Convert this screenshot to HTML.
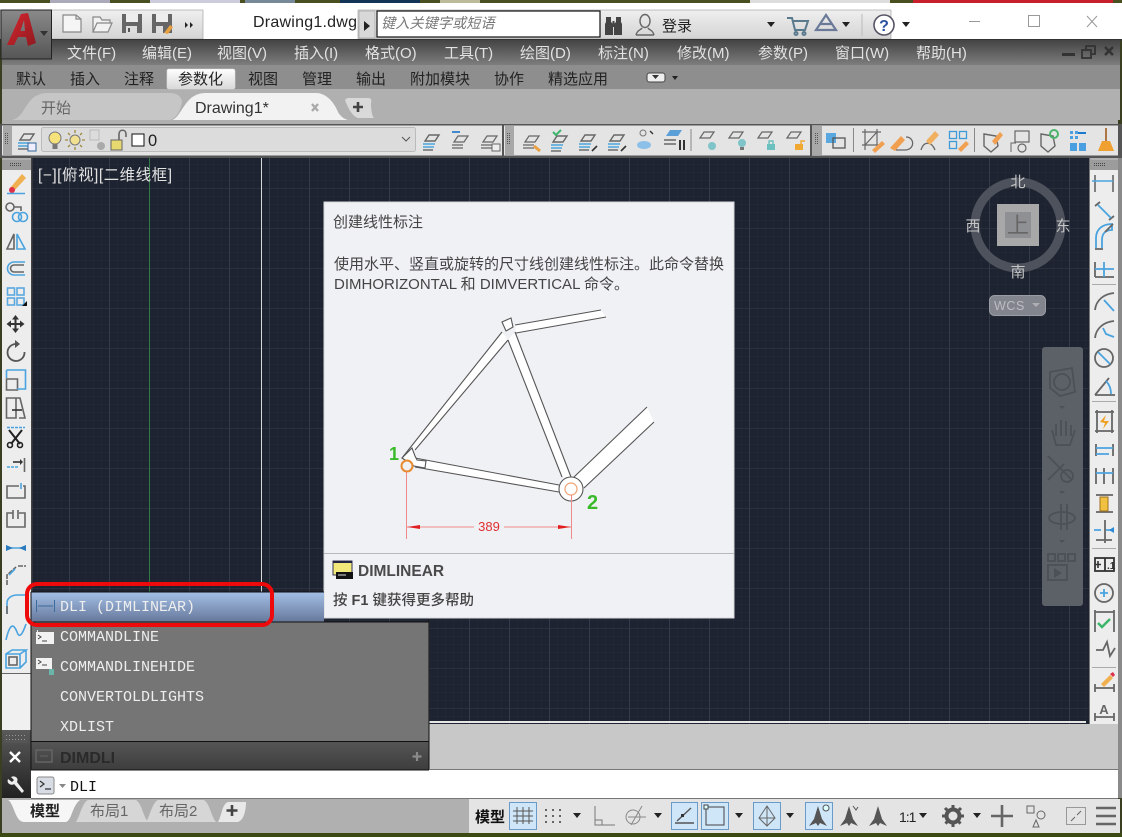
<!DOCTYPE html>
<html><head><meta charset="utf-8"><style>
html,body{margin:0;padding:0;background:#222}
svg{display:block}
text{font-family:"Liberation Sans","Noto Sans CJK SC",sans-serif}
.m{font-size:15px;fill:#e2e2e2}
.r{font-size:15px;fill:#222}
.c{font-family:"Liberation Mono","DejaVu Sans Mono",monospace;font-size:15px;fill:#eee}
.t{font-size:15px;fill:#444}
</style></head><body>
<svg width="1122" height="837" viewBox="0 0 1122 837" xmlns="http://www.w3.org/2000/svg">
<defs>
<linearGradient id="gq" x1="0" y1="0" x2="0" y2="1"><stop offset="0" stop-color="#efefef"/><stop offset="1" stop-color="#d4d4d4"/></linearGradient>
<linearGradient id="gm" x1="0" y1="0" x2="0" y2="1"><stop offset="0" stop-color="#444"/><stop offset="1" stop-color="#7d7d7d"/></linearGradient>
<linearGradient id="ga" x1="0" y1="0" x2="0" y2="1"><stop offset="0" stop-color="#8a8a8a"/><stop offset="1" stop-color="#555"/></linearGradient>
<linearGradient id="gA" x1="0" y1="0" x2="1" y2="1"><stop offset="0" stop-color="#d8262e"/><stop offset="1" stop-color="#8e1a20"/></linearGradient>
<linearGradient id="gh" x1="0" y1="0" x2="0" y2="1"><stop offset="0" stop-color="#a3bfe6"/><stop offset="1" stop-color="#66789a"/></linearGradient>
<linearGradient id="gf" x1="0" y1="0" x2="0" y2="1"><stop offset="0" stop-color="#555"/><stop offset="1" stop-color="#3d3d3d"/></linearGradient>
<linearGradient id="gt" x1="0" y1="0" x2="0" y2="1"><stop offset="0" stop-color="#fff"/><stop offset="1" stop-color="#d8d8d8"/></linearGradient>
<linearGradient id="gd" x1="0" y1="0" x2="0" y2="1"><stop offset="0" stop-color="#5a5a5a"/><stop offset="1" stop-color="#222"/></linearGradient>
<pattern id="p1" width="8" height="8" patternUnits="userSpaceOnUse" x="5" y="4"><path d="M0 .5H8M.5 0V8" stroke="#212733" stroke-width="1" fill="none"/></pattern>
<pattern id="p2" width="40" height="40" patternUnits="userSpaceOnUse" x="29" y="28"><path d="M0 .5H40" stroke="#2a303c" stroke-width="1" fill="none"/><path d="M.5 0V40" stroke="#343b48" stroke-width="1" fill="none"/></pattern>
<g id="lay" fill="none" stroke="#666" stroke-width="1.2"><path d="M-6 2L-2-4H8L4 2ZM-8 5H3M-8 8H3"/></g>
<g id="layb" fill="none" stroke-width="1.4"><path d="M-6 1L-2-5H8L4 1Z" stroke="#666"/><path d="M-8 4H4M-8 7H3" stroke="#4aa3df"/><path d="M-8 10H2" stroke="#666"/></g>
<g id="pl"><path d="M-7-1L-3-7H7L3-1Z" fill="none" stroke="#666" stroke-width="1.2"/></g>
<g id="dim" fill="none" stroke="#666" stroke-width="1.6"><path d="M-9-8V9M9-8V9"/><path d="M-12-2H9" stroke="#4aa3df"/></g>
<g id="dots" fill="#444"><rect x="0" y="0" width="1" height="1"/><rect x="2" y="0" width="1" height="1"/><rect x="4" y="0" width="1" height="1"/><rect x="0" y="2" width="1" height="1"/><rect x="2" y="2" width="1" height="1"/><rect x="4" y="2" width="1" height="1"/><rect x="6" y="0" width="1" height="1"/><rect x="8" y="0" width="1" height="1"/><rect x="10" y="0" width="1" height="1"/><rect x="6" y="2" width="1" height="1"/><rect x="8" y="2" width="1" height="1"/><rect x="10" y="2" width="1" height="1"/></g>
<g id="grip" fill="#555"><rect x="0" y="0" width="1" height="1"/><rect x="2" y="0" width="1" height="1"/><rect x="0" y="2" width="1" height="1"/><rect x="2" y="2" width="1" height="1"/><rect x="0" y="4" width="1" height="1"/><rect x="2" y="4" width="1" height="1"/><rect x="0" y="6" width="1" height="1"/><rect x="2" y="6" width="1" height="1"/><rect x="0" y="8" width="1" height="1"/><rect x="2" y="8" width="1" height="1"/><rect x="0" y="10" width="1" height="1"/><rect x="2" y="10" width="1" height="1"/></g>
<path id="da" d="M-4-2H4L0 3Z" fill="#222"/>
<path id="rock" d="M0-11L4 2L9 9L2 6L0 9L-2 6L-9 9L-4 2Z" fill="#555"/>
</defs>

<!-- wallpaper -->
<rect width="1122" height="837" fill="#3b3f22"/>
<rect x="0" y="0" width="1122" height="3" fill="#4a4f20"/>
<rect x="50" width="60" height="3" fill="#aab"/><rect x="150" width="90" height="3" fill="#ccd"/><rect x="245" width="50" height="3" fill="#789"/><rect x="340" width="80" height="3" fill="#135"/><rect x="440" width="40" height="3" fill="#bb9"/>
<rect x="750" width="140" height="3" fill="#ddd"/><rect x="913" width="200" height="3" fill="#c8202a"/>

<!-- window -->
<rect x="2" y="3" width="1116" height="830" fill="#b0b0b0"/>
<rect x="0" y="3" width="1122" height="36" fill="#fff"/>
<rect x="0" y="10" width="203" height="29" fill="url(#gq)" stroke="#999" stroke-width=".6"/>
<rect x="358" y="10" width="533" height="29" fill="url(#gq)" stroke="#999" stroke-width=".6"/>
<rect x="0" y="39" width="1122" height="1.500" fill="#333"/>
<rect x="2" y="40" width="1118" height="25" fill="url(#gm)"/>
<rect x="2" y="65" width="1118" height="24" fill="#8e8e8e"/>
<rect x="2" y="89" width="1118" height="31" fill="#b0b0b0"/>

<!-- App button -->
<rect x="1" y="10" width="50.500" height="49" fill="url(#ga)" stroke="#222"/>
<path d="M7 45L21 14L28 13L36 43L28 46L26 37H18L14 45ZM20.500 31H25L24 20Z" fill="url(#gA)" fill-rule="evenodd"/>
<path d="M40 31h8l-4 5z" fill="#333"/>

<!-- QAT icons -->
<g fill="none" stroke="#888" stroke-width="1.2">
<path d="M63 15H76L81 19V32H63Z" fill="#f5f5f5"/><path d="M76 15V19H81"/>
<path d="M93 32V17H100L102 20H110V23M93 32L97 23H112L108 32Z" fill="#f2f2f2"/>
</g>
<g>
<path d="M122 14H142V33H122Z" fill="#666"/><rect x="126" y="14" width="12" height="8" fill="#eee"/><rect x="126" y="26" width="11" height="7" fill="#ddd"/><rect x="128" y="28" width="2" height="4" fill="#555"/>
<path d="M152 14H172V33H152Z" fill="#666"/><rect x="156" y="14" width="12" height="8" fill="#eee"/><rect x="156" y="26" width="7" height="7" fill="#ddd"/>
<path d="M164 33L170 25L173 27L168 34Z" fill="#e8a040"/>
<path d="M185 22l3 3-3 3zM190 22l3 3-3 3z" fill="#222"/>
</g>
<text x="253" y="27" font-size="16" fill="#222" textLength="104" lengthAdjust="spacing">Drawing1.dwg</text>
<rect x="359" y="11" width="16" height="27" fill="#d8d8d8" stroke="#999" stroke-width=".6"/>
<path d="M364 21l6 5-6 5z" fill="#222"/>
<rect x="377" y="11" width="223" height="26" fill="#fff" stroke="#111" stroke-width="1.2"/>
<text x="381" y="28" font-size="14.200" font-style="italic" fill="#777">键入关键字或短语</text>

<!-- Infocenter -->
<g fill="#444">
<path d="M606 17h5v5l2 2v11h-8V24l1-2ZM616 17h5v5l1 2v11h-8V24l2-2Z"/><rect x="612.500" y="21" width="2" height="6"/>
</g>
<g fill="none" stroke="#666" stroke-width="1.4"><ellipse cx="645" cy="21" rx="5" ry="6.500"/><path d="M636 35c1-5 5-5 6-7M654 35c-1-5-5-5-6-7M636 35H654"/></g>
<text x="662" y="31" font-size="15" fill="#222">登录</text>
<use href="#da" x="771" y="24"/>
<g fill="none" stroke="#5a7a8e" stroke-width="2"><path d="M787 18H792L795 30H805L808 21H793"/><circle cx="796" cy="33.500" r="1.500"/><circle cx="804" cy="33.500" r="1.500"/></g>
<g fill="none" stroke="#6a7a98" stroke-width="2.200"><path d="M826 15L816 30H836ZM820 24h12"/></g>
<use href="#da" x="846" y="24"/>
<path d="M862 14V36" stroke="#bbb"/>
<circle cx="884" cy="25" r="10" fill="#fff" stroke="#556" stroke-width="1.600"/>
<text x="884" y="31" font-size="16" font-weight="bold" fill="#2a52a0" text-anchor="middle">?</text>
<use href="#da" x="906" y="24"/>
<!-- window btn -->
<path d="M969 21.500H980" stroke="#999"/><rect x="1028.500" y="15.500" width="11" height="11" fill="none" stroke="#999"/><path d="M1087 16L1097 27M1097 16L1087 27" stroke="#999" fill="none"/>

<!-- Menu -->
<text class="m" x="67" y="58">文件(F)</text><text class="m" x="142" y="58">编辑(E)</text><text class="m" x="217" y="58">视图(V)</text><text class="m" x="294" y="58">插入(I)</text><text class="m" x="365" y="58">格式(O)</text><text class="m" x="444" y="58">工具(T)</text><text class="m" x="520" y="58">绘图(D)</text><text class="m" x="598" y="58">标注(N)</text><text class="m" x="677" y="58">修改(M)</text><text class="m" x="758" y="58">参数(P)</text><text class="m" x="835" y="58">窗口(W)</text><text class="m" x="916" y="58">帮助(H)</text>
<rect x="1062" y="53" width="13" height="3" fill="#333"/>
<g fill="none" stroke="#333" stroke-width="1.800"><rect x="1082" y="50" width="9" height="8"/><path d="M1086 49V46H1095V54H1092"/></g>
<path d="M1105 47L1113 55M1113 47L1105 55" stroke="#333" stroke-width="2.600"/>

<!-- Ribbon -->
<rect x="167" y="69" width="68" height="20" rx="2" fill="url(#gt)" stroke="#ddd" stroke-width=".6"/>
<text class="r" x="16" y="84">默认</text><text class="r" x="70" y="84">插入</text><text class="r" x="124" y="84">注释</text><text class="r" x="178" y="84">参数化</text><text class="r" x="248" y="84">视图</text><text class="r" x="302" y="84">管理</text><text class="r" x="356" y="84">输出</text><text class="r" x="410" y="84">附加模块</text><text class="r" x="494" y="84">协作</text><text class="r" x="548" y="84">精选应用</text>
<rect x="647" y="73" width="18" height="9" rx="2.500" fill="#eee" stroke="#444"/><path d="M652 75h7l-3.500 4z" fill="#333"/><path d="M672 76h6l-3 4z" fill="#222"/>

<!-- File tabs -->
<path d="M12 120C24 118 26 99 38 95C42 93 46 93 50 93H170C178 93 182 98 182 102C180 112 176 118 170 120Z" fill="#c6c6c6"/>
<path d="M172 120C180 118 184 100 196 95C200 93 204 93 208 93H316C326 93 334 102 338 112C340 116 344 119 348 120Z" fill="#f2f2f2"/>
<text x="41" y="113" font-size="15" fill="#666">开始</text>
<text x="195" y="113" font-size="16" fill="#333">Drawing1*</text>
<path d="M312 104L318 111M318 104L312 111" stroke="#aaa" stroke-width="2.400"/>
<path d="M345 100C347 97 350 98 352 98H368C371 98 372 100 371 103C371 110 372 116 374 118H358C352 116 348 108 345 100Z" fill="#d9d9d9"/>
<path d="M358 102V112M353 107H363" stroke="#444" stroke-width="2.600"/>

<!-- Toolbars -->
<rect x="0" y="124" width="1122" height="34" fill="#555"/>
<rect x="2" y="125.500" width="500" height="30" fill="#e4e4e4"/>
<rect x="504" y="125.500" width="306" height="30" fill="#e4e4e4"/>
<rect x="812" y="125.500" width="306" height="30" fill="#e4e4e4"/>
<rect x="3" y="126" width="9" height="29" fill="#a8a8a8"/><rect x="505" y="126" width="9" height="29" fill="#a8a8a8"/><rect x="812" y="126" width="10" height="29" fill="#a8a8a8"/>
<use href="#grip" x="5" y="133"/><use href="#grip" x="507" y="133"/><use href="#grip" x="815" y="133"/>
<rect x="41.500" y="127.500" width="374" height="24" rx="2" fill="#dcdcdc" stroke="#bbb"/>
<use href="#layb" x="26" y="139"/><rect x="28" y="143" width="8" height="8" fill="#eef" stroke="#369"/>
<!-- layer state -->
<circle cx="55" cy="138" r="6" fill="#f6e27a" stroke="#777"/><rect x="52.500" y="144" width="5" height="5" fill="#777"/>
<circle cx="75" cy="140" r="5" fill="#f0e090" stroke="#777"/><path d="M75 130V133M75 147V150M65 140H68M82 140H85M68 133L70 135M80 145L82 147M82 133L80 135M70 145L68 147" stroke="#a08a40" stroke-width="1.300"/>
<rect x="90" y="130" width="9" height="10" fill="none" stroke="#bbb"/><circle cx="101" cy="146" r="4" fill="#aaa"/>
<rect x="111" y="140" width="11" height="10" fill="#e8d870" stroke="#666"/><path d="M119 140V134C119 129 126 129 126 134V137" fill="none" stroke="#666" stroke-width="1.600"/>
<rect x="132" y="134" width="12" height="12" fill="#fff" stroke="#111"/>
<text x="148" y="146" font-size="16.500" fill="#222">0</text>
<path d="M402 137L406 141L410 137" fill="none" stroke="#555"/>
<use href="#layb" x="431" y="140"/><use href="#lay" x="460" y="140"/><path d="M452 132h8" stroke="#48c" stroke-width="2"/><use href="#lay" x="489" y="140"/><rect x="492" y="144" width="8" height="7" fill="#eee" stroke="#666"/>
<use href="#lay" x="531" y="140"/><path d="M534 146l6 5" stroke="#e8a040" stroke-width="3"/>
<use href="#layb" x="559" y="141"/><path d="M553 132l3 3 5-5" stroke="#3ab56a" stroke-width="2" fill="none"/>
<use href="#layb" x="587" y="140"/><path d="M592 151l5-5" stroke="#333" stroke-width="1.600"/>
<use href="#layb" x="616" y="140"/><path d="M621 151l5-5" stroke="#333" stroke-width="1.600"/>
<circle cx="643" cy="133" r="3" fill="none" stroke="#777"/><ellipse cx="644" cy="145" rx="7" ry="4" fill="#8cc0e8"/><path d="M650 131l3 3" stroke="#333" stroke-width="1.400"/>
<path d="M666 136L670 130H682L678 136Z" fill="#5a9fd8"/><path d="M664 140H676M664 144H676" stroke="#666" stroke-width="1.400"/><path d="M680 140V150M684 140V150" stroke="#333" stroke-width="2"/>
<path d="M691 129V151" stroke="#888"/>
<use href="#pl" x="707" y="139"/><circle cx="712" cy="146" r="4" fill="#7ec4c8"/>
<use href="#pl" x="736" y="139"/><circle cx="742" cy="143" r="4" fill="#7ec4c8"/><rect x="740" y="147" width="4" height="3" fill="#777"/>
<use href="#pl" x="765" y="139"/><rect x="767" y="144" width="8" height="6" fill="#6cc0c0"/><path d="M769 144V141H773V144" stroke="#6cc0c0" fill="none" stroke-width="1.400"/>
<use href="#pl" x="794" y="139"/><rect x="795" y="144" width="8" height="6" fill="#f0a830"/><path d="M801 144V141H805" stroke="#f0a830" fill="none" stroke-width="1.400"/>
<rect x="826" y="133" width="10" height="10" fill="#5aa8e0"/><rect x="833" y="138" width="12" height="10" fill="none" stroke="#555" stroke-width="1.300"/>
<path d="M853.500 128V152" stroke="#888"/>
<g stroke="#666" fill="none" stroke-width="1.200"><path d="M862 132H881M862 145H881M865 129V150M877 129V150M865 145L877 132"/></g><path d="M872 150L882 141L885 144L875 153Z" fill="#f0a050"/>
<path d="M890 148L901 136L905 140L895 151Z" fill="#f0a050"/><path d="M906 137C915 137 915 150 905 150H896" fill="none" stroke="#666" stroke-width="1.300"/>
<path d="M921 150C924 140 932 142 935 150" fill="none" stroke="#666" stroke-width="1.300"/><path d="M926 141L935 131L939 135L930 145Z" fill="#f0b060"/>
<g fill="none" stroke="#3f9ad8" stroke-width="1.300"><rect x="949.500" y="131.500" width="7" height="7"/><rect x="959.500" y="131.500" width="7" height="7"/><rect x="949.500" y="141.500" width="7" height="7"/></g><path d="M958 149L966 141L969 144L961 152Z" fill="#f0a050"/>
<path d="M974.500 128V152" stroke="#888"/>
<path d="M984 134L996 136L998 146L991 152L984 146Z" fill="none" stroke="#666" stroke-width="1.400"/><path d="M992 141L1000 132L1003 135L995 145Z" fill="#f0a050"/>
<rect x="1015" y="131" width="14" height="11" fill="none" stroke="#666" stroke-width="1.200"/><path d="M1011 152V143H1016" fill="none" stroke="#666"/><circle cx="1022" cy="148" r="4" fill="none" stroke="#666" stroke-width="1.200"/>
<path d="M1041 134L1053 136L1055 146L1048 152L1041 146Z" fill="none" stroke="#666" stroke-width="1.400"/><circle cx="1054" cy="134" r="4" fill="none" stroke="#4ab56a" stroke-width="2"/>
<g fill="#4a9fe0"><rect x="1070" y="131" width="3" height="3"/><rect x="1075" y="131" width="3" height="3"/><rect x="1070" y="136" width="3" height="3"/><rect x="1075" y="136" width="3" height="3"/><rect x="1070" y="143" width="7" height="8"/><rect x="1079" y="143" width="7" height="8"/></g><path d="M1078 133H1086" stroke="#1a7ad0" stroke-width="2"/>
<path d="M1106 128V141" stroke="#a05a20" stroke-width="1.600"/><path d="M1102 141H1110L1114 151H1098Z" fill="#f0a030"/>

<!-- Canvas -->
<rect x="31" y="158" width="1058" height="566" fill="#1d2330"/>
<rect x="31" y="158" width="1058" height="566" fill="url(#p1)"/>
<rect x="31" y="158" width="1058" height="566" fill="url(#p2)"/>
<path d="M149.500 158V722" stroke="#2f7a45"/>
<path d="M261.500 158V722" stroke="#d8d8d8"/>
<rect x="31" y="721" width="1055" height="2" fill="#e6e6e6"/>
<text x="38" y="180" font-size="15.500" fill="#e2e2e2" textLength="134" lengthAdjust="spacing">[−][俯视][二维线框]</text>

<!-- ViewCube -->
<circle cx="1018" cy="225" r="43" fill="none" stroke="#4d525c" stroke-width="9"/>
<rect x="997" y="204" width="42" height="42" fill="#a8a8a8"/><rect x="1005" y="212" width="26" height="26" fill="#8f9094"/>
<text x="1018" y="233" font-size="22" fill="#666" text-anchor="middle">上</text>
<g font-size="15" fill="#c4c4c4" text-anchor="middle"><text x="1018" y="187">北</text><text x="1018" y="277">南</text><text x="973" y="231">西</text><text x="1063" y="231">东</text></g>
<rect x="989.500" y="295.500" width="56" height="20" rx="5" fill="#83858e" stroke="#9a9ca4"/>
<text x="994" y="310" font-size="12.500" letter-spacing=".6" fill="#bdbdc2">WCS</text><path d="M1032 303h8l-4 4z" fill="#b0b0b4"/>

<!-- Nav bar -->
<rect x="1042" y="347" width="41" height="259" rx="3" fill="#5c6067"/>
<g fill="none" stroke="#4c5057" stroke-width="1.800">
<path d="M1050 372L1072 368L1075 392L1060 396L1050 388Z"/><circle cx="1062" cy="382" r="8"/>
<path d="M1052 430L1056 445H1070L1075 430M1056 424V436M1061 420V436M1066 421V436M1071 425V436"/>
<path d="M1048 456L1072 480M1048 480L1064 464"/><circle cx="1067" cy="476" r="6"/>
<path d="M1061 504V530M1067 504V530"/><ellipse cx="1062" cy="518" rx="13" ry="6"/>
<rect x="1048" y="554" width="7" height="7"/><rect x="1058" y="554" width="7" height="7"/><rect x="1068" y="554" width="7" height="7"/><rect x="1048" y="565" width="19" height="15"/>
</g>
<path d="M1054 568l8 5-8 5z" fill="#4c5057"/>
<path d="M1059 406h6l-3 3zM1059 491h6l-3 3zM1059 540h6l-3 3z" fill="#4c5057"/>

<!-- Tooltip -->
<rect x="324" y="202" width="410" height="416" fill="#f0f1f5" stroke="#d6d7db"/>
<text class="t" x="333" y="227">创建线性标注</text>
<text class="t" x="334" y="269">使用水平、竖直或旋转的尺寸线创建线性标注。此命令替换</text>
<text class="t" x="334" y="289">DIMHORIZONTAL 和 DIMVERTICAL 命令。</text>
<!-- bike -->
<g stroke="#555" stroke-width="1.100" fill="#fff">
<path d="M515 325L601 310L606 317L516 333Z" stroke="none"/><path d="M515 325L601 310M516 333L606 317" fill="none"/>
<path d="M402 458L502 332L508 340L415 450Z" stroke="none"/><path d="M402 458L502 332M415 450L508 340" fill="none"/>
<path d="M508 340L562 477L571 477L515 332Z" stroke="none"/><path d="M508 340L562 477M515 332L571 477" fill="none"/>
<path d="M415 458L559 485V492L415 467Z" stroke="none"/><path d="M415 458L559 485M415 467L559 492" fill="none"/>
<path d="M574 477L647 407L654 422L584 488Z" stroke="none"/><path d="M574 477L647 407M584 488L654 422" fill="none"/>
<path d="M502 322L511 318L513 327L506 331Z"/>
<circle cx="571" cy="489" r="12"/>
<path d="M402 458L412 448L415 456L417 460L426 461L425 468L414 466L408 462Z"/>
</g>
<circle cx="571" cy="489" r="6" fill="none" stroke="#f0a070" stroke-width="1.200"/>
<circle cx="407" cy="466" r="5.500" fill="#f0f1f5" stroke="#e88a30" stroke-width="2"/>
<g stroke="#f08a8a"><path d="M406.500 472V539M571.500 495V539M407 527H474M504 527H571"/></g>
<path d="M407 527L420 525V529ZM571 527L558 525V529Z" fill="#e02020"/>
<text x="489" y="531" font-size="13" fill="#e03030" text-anchor="middle">389</text>
<text x="389" y="460" font-size="18" font-weight="bold" fill="#3aba2a">1</text>
<text x="587" y="509" font-size="20" font-weight="bold" fill="#3aba2a">2</text>
<path d="M324 553.500H734" stroke="#b8b8bc"/>
<rect x="333" y="561" width="19" height="14" fill="#f2e87a" stroke="#335"/><rect x="333" y="561" width="19" height="2" fill="#224"/><rect x="336" y="572" width="17" height="7" fill="#111"/><path d="M338 575h8" stroke="#ddd"/>
<text x="358" y="576" font-size="15.500" font-weight="bold" fill="#4a4a4a">DIMLINEAR</text>
<text x="333" y="605" font-size="14.500" fill="#444" font-weight="500">按 <tspan font-weight="bold">F1</tspan> 键获得更多帮助</text>

<!-- Left toolbar -->
<rect x="2" y="160" width="29" height="513" fill="#ededed"/>
<rect x="2" y="160" width="29" height="10" fill="#9c9c9c"/><use href="#dots" x="10" y="163"/>
<rect x="31" y="158" width="1.500" height="515" fill="#444"/>
<g fill="none" stroke-width="1.600" stroke="#666">
<path d="M22 174L26 178L14 191L10 188Z" fill="#f0b050" stroke="none"/><circle cx="12" cy="190" r="3" fill="#e0304a" stroke="none"/><path d="M7 193.500H25" stroke="#4aa3df"/>
<circle cx="10" cy="207" r="4"/><circle cx="17" cy="217" r="4.500" stroke="#4aa3df"/><circle cx="23" cy="217" r="4.500" stroke="#4aa3df"/><path d="M14 207H21V211"/>
<path d="M7 249L14 234V249Z"/><path d="M17 234V249H25Z" stroke="#4aa3df"/>
<path d="M25 262H14A6.500 6.500 0 0 0 14 275H25" stroke="#4aa3df"/><path d="M24 265H14A3 3 0 0 0 14 272H24"/>
<g stroke="#5aa8e0"><rect x="7.500" y="288" width="7" height="7"/><rect x="17" y="288" width="7" height="7"/><rect x="7.500" y="298" width="7" height="7"/><rect x="17" y="298" width="7" height="7"/></g>
<path d="M15.500 317V331M8 324H23" stroke="#333" stroke-width="2"/>
<path d="M16 344A8.500 8.500 0 1 0 24.500 352" stroke="#555" stroke-width="1.800"/>
<path d="M6.500 390V379H17.500V390Z"/><path d="M17 370H25.500V389H17" stroke="#4aa3df"/><path d="M6.500 370H17M6.500 370V378" stroke="#4aa3df"/>
<path d="M6.500 398H16V418H6.500ZM16 398H20L25 418H19"/><path d="M12 410H22" stroke="#333"/>
<path d="M9 430L20 444M22 430L11 444" stroke="#222" stroke-width="2"/><circle cx="10" cy="445" r="2.500" stroke="#222"/><circle cx="20" cy="445" r="2.500" stroke="#222"/><path d="M7 427.500H25" stroke="#4aa3df" stroke-dasharray="3 1"/>
<path d="M7 467H18" stroke="#4aa3df" stroke-dasharray="3 1"/><path d="M13 462H20" stroke="#333"/><path d="M24.500 458V472"/><path d="M20 459l3 3-3 3z" fill="#333" stroke="none"/>
<path d="M19 486H7V498H25V486H23"/><path d="M21 483V489" stroke="#4aa3df"/>
<path d="M13 513H7V527H25V513H19M13 510V519M18 510V519"/>
<path d="M6 548H26" stroke="#4aa3df"/><path d="M6 545l7 3-7 3zM26 545l-7 3 7 3z" fill="#2a7ac0" stroke="none"/>
<path d="M7 585V575L16 567M18 566H26" stroke-dasharray="5 1"/><path d="M9 575L15 569" stroke="#4aa3df"/>
<path d="M7 614V603C7 598 12 595 17 595H26" stroke="#4aa3df"/><path d="M7 606V614"/>
<path d="M6 640C10 622 14 624 17 632C19 638 22 636 26 624" stroke="#4aa3df"/>
<path d="M6 654H20V668H6ZM6 654L12 650H26L20 654M26 650V662L20 668" stroke="#4aa3df"/><rect x="9" y="657" width="8" height="8"/>
</g>
<path d="M15.500 315L19 319.500H12ZM15.500 333L19 328.500H12ZM6.500 324L11 320.500V327.500ZM24.500 324L20 320.500V327.500Z" fill="#333"/>
<path d="M15 340L20 344L15 348Z" fill="#555"/>
<path d="M22 306L27 301V306Z" fill="#111"/>

<!-- Right toolbar -->
<rect x="1089" y="158" width="1.200" height="566" fill="#777"/>
<rect x="1090" y="160" width="28" height="570" fill="#ededed"/>
<rect x="1090" y="160" width="28" height="10" fill="#9c9c9c"/><use href="#dots" x="1094" y="163"/>
<rect x="1118" y="158" width="4" height="640" fill="#8a8a8a"/>
<use href="#dim" x="1104" y="183"/>
<g fill="none" stroke="#666" stroke-width="1.800">
<path d="M1095 206L1100 202M1109 220L1114 216"/><path d="M1098 205L1111 218" stroke="#4aa3df"/>
<path d="M1096 248V238C1096 228 1104 224 1112 224V230C1106 230 1102 233 1102 240V248" stroke="#4aa3df"/><path d="M1095 249H1103M1105 232L1113 224"/>
<path d="M1095 277H1114M1095 262V277"/><path d="M1095 269H1114M1104 262V277" stroke="#4aa3df"/>
<path d="M1095 310C1096 300 1104 294 1114 293"/><path d="M1104 300L1114 311" stroke="#4aa3df"/>
<path d="M1095 338C1096 328 1104 322 1114 321"/><path d="M1103 328L1106 334L1114 337" stroke="#4aa3df"/>
<circle cx="1104" cy="358" r="9"/><path d="M1098 352L1110 364" stroke="#4aa3df"/>
<path d="M1095 395H1115M1095 395L1109 378"/><path d="M1106 381C1110 385 1111 390 1111 394" stroke="#4aa3df"/>
<path d="M1095 412H1114M1095 431H1114M1097 410V433M1112 410V433"/>
<path d="M1096 444V456M1113 444V456"/><path d="M1096 448H1113M1096 454H1109" stroke="#4aa3df"/>
<path d="M1096 468V484M1104 468V484M1113 468V484"/><path d="M1096 473H1113" stroke="#4aa3df"/>
<path d="M1096 495H1113M1096 512H1113"/>
<path d="M1105 520V543M1096 540H1112"/><path d="M1094 530H1101M1106 530H1113" stroke="#4aa3df"/>
<rect x="1095" y="558" width="19" height="13" stroke="#333"/><path d="M1105 558V571" stroke="#333"/>
<circle cx="1104" cy="593" r="9"/><path d="M1104 589V597M1100 593H1108" stroke="#4aa3df"/>
<path d="M1095 612H1114M1095 610V632M1114 610V632"/>
<path d="M1096 650L1103 650L1107 642L1110 656L1115 648"/>
<path d="M1095 688H1114M1095 684V692M1114 684V692"/>
<path d="M1095 717H1114M1095 713V721M1114 713V721"/>
</g>
<path d="M1100 422L1106 415L1104 421H1109L1103 429L1105 423Z" fill="#f0a020"/>
<rect x="1100" y="497" width="8" height="14" fill="#f0c040" stroke="#a07020"/>
<path d="M1109 530l5-3v6z" fill="#2a8ad8"/>
<path d="M1098 561V568M1095.500 564.500H1101" stroke="#333" stroke-width="1.600"/>
<text x="1107" y="569" font-size="10" font-weight="bold" fill="#333">.1</text>
<path d="M1098 623L1102 627L1110 619" fill="none" stroke="#3ab56a" stroke-width="2.400"/>
<path d="M1101 684L1110 675L1113 678L1104 687Z" fill="#f0b050"/>
<path d="M1110 674l3-2 2 3-2 2z" fill="#e0304a"/>
<text x="1104" y="714" font-size="13" font-weight="bold" fill="#666" text-anchor="middle">A</text>
<path d="M1092 284.500H1116M1092 401.500H1116M1092 548.500H1116M1092 667.500H1116" stroke="#aaa"/>

<!-- Command area -->
<rect x="2" y="673" width="29" height="57" fill="#f0f0f0"/>
<rect x="2" y="673" width="29" height="1" fill="#666"/>
<rect x="430" y="724" width="688" height="46" fill="#c8c8c8"/>
<rect x="31" y="724" width="400" height="46" fill="#c8c8c8"/>
<path d="M430 769.500H1118" stroke="#777"/>
<rect x="2" y="730" width="29" height="68" fill="url(#gd)"/>
<rect x="4" y="735" width="24" height="8" fill="#555"/>
<g fill="#9a9a9a"><rect x="6" y="735" width="1" height="1"/><rect x="9" y="735" width="1" height="1"/><rect x="12" y="735" width="1" height="1"/><rect x="15" y="735" width="1" height="1"/><rect x="18" y="735" width="1" height="1"/><rect x="21" y="735" width="1" height="1"/><rect x="24" y="735" width="1" height="1"/><rect x="6" y="739" width="1" height="1"/><rect x="9" y="739" width="1" height="1"/><rect x="12" y="739" width="1" height="1"/><rect x="15" y="739" width="1" height="1"/><rect x="18" y="739" width="1" height="1"/><rect x="21" y="739" width="1" height="1"/><rect x="24" y="739" width="1" height="1"/></g>
<path d="M10 752L20 762M20 752L10 762" stroke="#fff" stroke-width="2.400"/>
<path d="M8 779C6 784 12 786 14 784L22 793L24 791L17 782C19 778 15 775 11 777L14 780L12 782Z" fill="#eee"/>
<rect x="31" y="770" width="1087" height="28" fill="#fff"/>
<path d="M31 798.500H1118" stroke="#777"/>
<rect x="37" y="777" width="17" height="17" rx="2" fill="#d8dce4" stroke="#888"/>
<path d="M40 781l4 3-4 3M45 789h6" fill="none" stroke="#333" stroke-width="1.200"/>
<path d="M59 784h7l-3.500 4z" fill="#888"/>
<text class="c" x="70" y="791" style="fill:#111">DLI</text>

<!-- Dropdown -->
<rect x="31" y="622" width="398" height="120" fill="#757575"/>
<rect x="31" y="742" width="398" height="28" fill="url(#gf)"/>
<rect x="31" y="592" width="293" height="30" fill="url(#gh)"/>
<path d="M31 592H324M31 622H429M31 741.500H429M31 770H429M31 592V770M429 619V770" stroke="#111" fill="none"/>
<path d="M36.500 600V612M54.500 600V612M38 606H53" stroke="#3d6a9c" fill="none"/>
<text class="c" x="60" y="611">DLI (DIMLINEAR)</text>
<text class="c" x="60" y="641">COMMANDLINE</text>
<text class="c" x="60" y="671">COMMANDLINEHIDE</text>
<text class="c" x="60" y="701">CONVERTOLDLIGHTS</text>
<text class="c" x="60" y="731">XDLIST</text>
<rect x="36" y="632" width="18" height="12" fill="#f2f2f2"/><path d="M37 632h1v-2h-1z" fill="#eee"/><path d="M38 635l3 2-3 2M42 641h5" stroke="#444" fill="none"/>
<rect x="36" y="658" width="16" height="11" fill="#f2f2f2"/><path d="M38 660l3 2-3 2M42 665h5" stroke="#444" fill="none"/><rect x="49" y="669" width="5" height="6" fill="#6ab4a8"/>
<rect x="36" y="750" width="16" height="12" fill="none" stroke="#656565" stroke-width="1.500"/><path d="M40 756h8" stroke="#656565"/>
<text x="60" y="763" font-size="16" font-weight="bold" fill="#2a2a2a">DIMDLI</text>
<path d="M417 752V761M412.500 756.500H421.500" stroke="#8a8a8a" stroke-width="2.200"/>
<rect x="27" y="584" width="245" height="41" rx="10" fill="none" stroke="#ee0a0a" stroke-width="4"/>

<!-- Status -->
<rect x="2" y="799" width="1118" height="34" fill="#b0b0b0"/>
<rect x="469" y="799" width="651" height="34" fill="#e4e4e4"/>
<path d="M8 800C14 803 15 822 24 822H66C72 820 72 806 80 800Z" fill="#f6f6f6"/>
<path d="M76 822C80 816 82 803 88 800H136C142 804 143 816 148 822Z" fill="#d6d6d6"/>
<path d="M146 822C150 816 152 803 158 800H204C210 804 211 816 216 822Z" fill="#d6d6d6"/>
<path d="M218 822C222 815 222 804 228 802H246C246 810 244 820 238 822Z" fill="#e8e8e8"/>
<text x="30" y="816" font-size="15" font-weight="bold" fill="#222">模型</text>
<text x="90" y="816" font-size="15" fill="#666">布局1</text>
<text x="159" y="816" font-size="15" fill="#666">布局2</text>
<path d="M232 805V816M226.500 810.500H237.500" stroke="#444" stroke-width="2.600"/>
<text x="475" y="822" font-size="15" fill="#111" font-weight="bold">模型</text>
<g fill="#cfe5f8" stroke="#6a9ac8"><rect x="509.500" y="802.500" width="27" height="27"/><rect x="671.500" y="802.500" width="26" height="27"/><rect x="701.500" y="802.500" width="27" height="27"/><rect x="753.500" y="802.500" width="27" height="27"/><rect x="805.500" y="802.500" width="27" height="27"/></g>
<path d="M517 807V824M523 807V824M529 807V824M513 811H533M513 816H533M513 821H533" stroke="#555"/>
<g fill="#666"><rect x="545" y="809" width="2" height="2"/><rect x="552" y="809" width="2" height="2"/><rect x="559" y="809" width="2" height="2"/><rect x="545" y="815" width="2" height="2"/><rect x="552" y="815" width="2" height="2"/><rect x="559" y="815" width="2" height="2"/><rect x="545" y="821" width="2" height="2"/><rect x="552" y="821" width="2" height="2"/><rect x="559" y="821" width="2" height="2"/></g>
<use href="#da" x="577" y="815"/>
<path d="M595 806V825H615M595 820H602V825" fill="none" stroke="#777"/>
<circle cx="633" cy="817" r="7" fill="none" stroke="#888"/><path d="M628 817H646M631 825L642 806" stroke="#888" fill="none"/>
<use href="#da" x="658" y="815"/>
<path d="M675 823H694M677 821L691 808" stroke="#555" stroke-width="1.400" fill="none"/><rect x="681" y="814" width="3" height="3" fill="#333"/>
<rect x="706" y="807" width="18" height="18" fill="none" stroke="#444"/><rect x="704" y="805" width="4" height="4" fill="#dff" stroke="#444"/>
<use href="#da" x="739" y="815"/>
<path d="M767 806L759 818L767 826L775 818Z M767 806V814M759 818H775M767 814V826" fill="none" stroke="#666"/>
<use href="#da" x="790" y="815"/>
<use href="#rock" x="818" y="817"/><circle cx="826" cy="808" r="3" fill="#dff" stroke="#555"/>
<use href="#rock" x="849" y="817"/><path d="M853 806L856 810L858 807" stroke="#555" fill="none"/>
<use href="#rock" x="878" y="817"/>
<text x="899" y="822" font-size="14" letter-spacing="-1" font-weight="500" fill="#222">1:1</text>
<use href="#da" x="923" y="815"/>
<circle cx="953" cy="816" r="6.500" fill="none" stroke="#555" stroke-width="4"/><path d="M953 805V827M942 816H964M945 808L961 824M961 808L945 824" stroke="#555" stroke-width="3" stroke-dasharray="3 16"/>
<use href="#da" x="977" y="815"/>
<path d="M1002 805V827M991 816H1013" stroke="#666" stroke-width="2.600"/>
<rect x="1027" y="806" width="7" height="7" fill="none" stroke="#666"/><circle cx="1041" cy="815" r="4" fill="none" stroke="#666"/><path d="M1033 827L1036 820L1039 827Z" fill="none" stroke="#666"/>
<rect x="1066.500" y="807.500" width="19" height="17" fill="none" stroke="#999"/><path d="M1071 821l4-4M1081 811l-4 4" stroke="#666"/>
<path d="M1096 808H1116M1096 816H1116M1096 824H1116" stroke="#666" stroke-width="2.600"/>
<path d="M0 833H1122V837H0Z" fill="#3b4a12"/>
</svg>
</body></html>
